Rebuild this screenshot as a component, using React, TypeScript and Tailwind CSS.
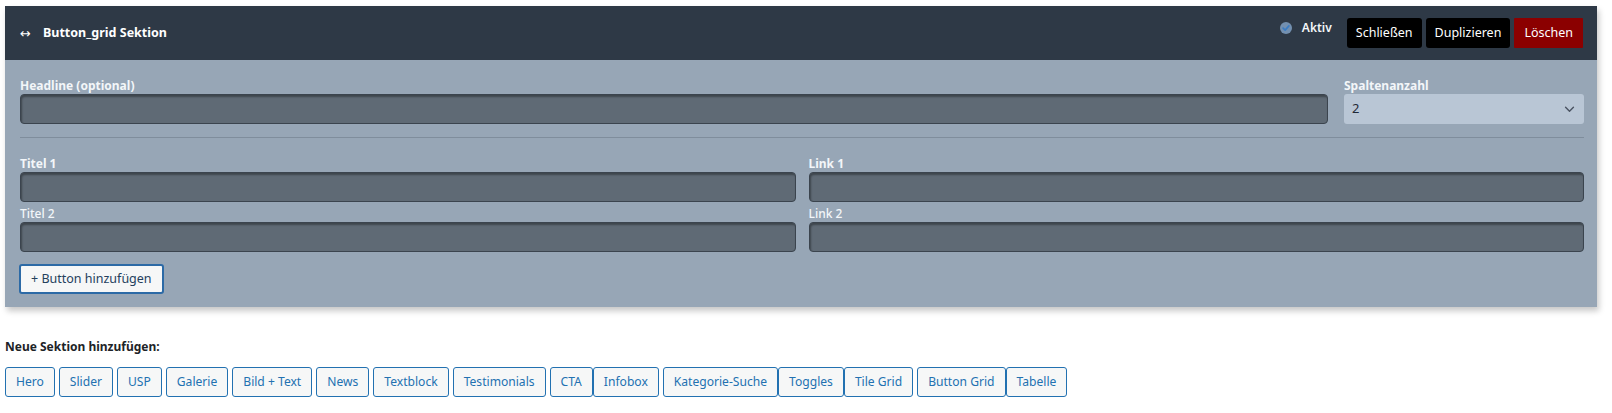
import React from 'react';

const sectionTypes = [
    { label: 'Hero', gap: true },
    { label: 'Slider', gap: true },
    { label: 'USP', gap: true },
    { label: 'Galerie', gap: true },
    { label: 'Bild + Text', gap: true },
    { label: 'News', gap: true },
    { label: 'Textblock', gap: true },
    { label: 'Testimonials', gap: true },
    { label: 'CTA', gap: false },
    { label: 'Infobox', gap: true },
    { label: 'Kategorie-Suche', gap: false },
    { label: 'Toggles', gap: false },
    { label: 'Tile Grid', gap: true },
    { label: 'Button Grid', gap: false },
    { label: 'Tabelle', gap: false },
];

const buttonRows = [
    { titel: 'Titel 1', link: 'Link 1', strong: true },
    { titel: 'Titel 2', link: 'Link 2', strong: false },
];

const FieldInput = () => (
    <div className="h-[30px] w-full rounded-[4px] bg-[#5f6a75] border border-[#3b444e] shadow-[inset_1px_2px_2px_rgba(0,0,0,0.35)]" />
);

const FieldLabel = ({ children, strong = true }: { children: React.ReactNode; strong?: boolean }) => (
    <label className={`block h-[16px] leading-[16px] text-[12px] text-[#f3f6f9] ${strong ? 'font-bold' : 'font-medium'}`}>
        {children}
    </label>
);

const App: React.FC = () => {
    return (
        <div
            className="min-h-[413px] bg-white pt-[6px] pl-[5px] pr-[15px] text-[12px] text-[#1d2327]"
            style={{ fontFamily: '"Noto Sans", "Liberation Sans", sans-serif' }}
        >
            {/* Section panel */}
            <div className="shadow-[2px_4px_6px_rgba(0,0,0,0.22)]">
                {/* Header */}
                <div className="h-[54px] bg-[#2e3946] flex items-center justify-between pl-[15px] pr-[14px]">
                    <div className="flex items-center text-white font-bold text-[12.5px]">
                        <span className="font-normal text-[13px] w-[23px] leading-none font-['DejaVu_Sans',sans-serif]">↔</span>
                        <span>Button_grid Sektion</span>
                    </div>
                    <div className="flex items-center">
                        <label className="flex items-center gap-[10px] mr-[15px] -mt-[10px] text-[#f3f6f9] font-semibold text-[12px]">
                            <span className="w-[12px] h-[12px] rounded-full bg-[#7390b0] flex items-center justify-center">
                                <svg viewBox="0 0 12 12" className="w-[10px] h-[10px]">
                                    <path d="M2.5 6.2 L5 8.5 L9.5 3.5" fill="none" stroke="#3a7cc4" strokeWidth="2" strokeLinecap="round" strokeLinejoin="round" />
                                </svg>
                            </span>
                            Aktiv
                        </label>
                        <button className="h-[30px] px-[9px] rounded-[3px] bg-black text-white text-[12.5px] mr-[4px]">Schließen</button>
                        <button className="h-[30px] px-[9px] rounded-[3px] bg-black text-white text-[12.5px] mr-[4px]">Duplizieren</button>
                        <button className="h-[30px] px-[10px] rounded-[1px] bg-[#8b0000] text-white text-[12.5px]">Löschen</button>
                    </div>
                </div>

                {/* Body */}
                <div className="bg-[#97a6b6] pl-[15px] pr-[13px] pt-[18px] pb-[13px]">
                    <div className="flex gap-[16px]">
                        <div className="flex-1">
                            <FieldLabel>Headline (optional)</FieldLabel>
                            <FieldInput />
                        </div>
                        <div className="w-[240px]">
                            <FieldLabel>Spaltenanzahl</FieldLabel>
                            <div className="h-[30px] rounded-[3px] bg-[#b9c6d5] flex items-center justify-between pl-[8px] pr-[9px] text-[13px] text-[#1f2937]">
                                <span>2</span>
                                <svg viewBox="0 0 12 8" className="w-[11px] h-[7px]">
                                    <path d="M1.5 1.5 L6 6 L10.5 1.5" fill="none" stroke="#4a5361" strokeWidth="1.6" strokeLinecap="round" strokeLinejoin="round" />
                                </svg>
                            </div>
                        </div>
                    </div>

                    <div className="mt-[13px] mb-[18px] h-px bg-[#7f8d9c]" />

                    <div className="grid grid-cols-2 gap-x-[13px] gap-y-[4px]">
                        {buttonRows.map((row) => (
                            <React.Fragment key={row.titel}>
                                <div>
                                    <FieldLabel strong={row.strong}>{row.titel}</FieldLabel>
                                    <FieldInput />
                                </div>
                                <div>
                                    <FieldLabel strong={row.strong}>{row.link}</FieldLabel>
                                    <FieldInput />
                                </div>
                            </React.Fragment>
                        ))}
                    </div>

                    <button className="mt-[12px] h-[30px] px-[10px] rounded-[3px] bg-[#f6f7f7] border-2 border-[#2c6aa6] text-[#24405c] text-[12.5px] -ml-[1px]">
                        + Button hinzufügen
                    </button>
                </div>
            </div>

            {/* Add section */}
            <div className="mt-[32px] h-[16px] leading-[16px] font-bold text-[12px] text-[#1d2327]">Neue Sektion hinzufügen:</div>
            <div className="mt-[12px] flex flex-wrap">
                {sectionTypes.map((s) => (
                    <button
                        key={s.label}
                        className={`h-[30px] px-[10px] rounded-[3px] bg-[#f6f7f7] border border-[#2271b1] text-[#2271b1] text-[12.1px] ${s.gap ? 'mr-[4px]' : 'mr-0'}`}
                    >
                        {s.label}
                    </button>
                ))}
            </div>
        </div>
    );
};

export default App;
